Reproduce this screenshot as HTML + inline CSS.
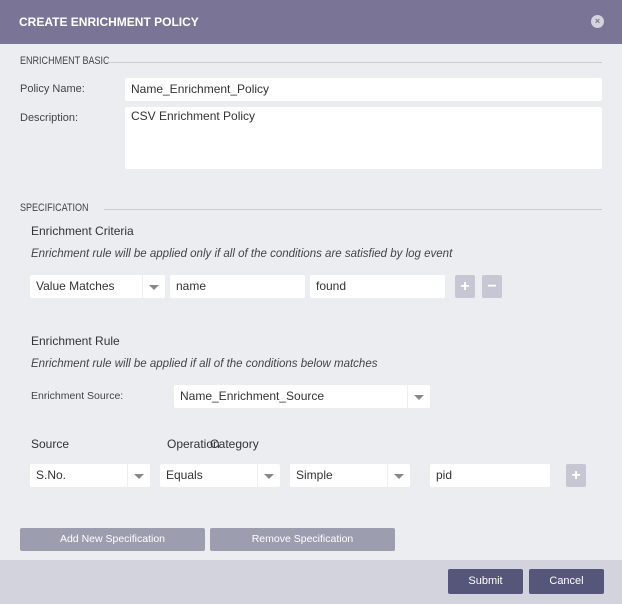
<!DOCTYPE html><html><head><style>
*{box-sizing:border-box;margin:0;padding:0}
body{width:622px;height:604px;background:#ecedf1;font-family:"Liberation Sans",sans-serif;position:relative;overflow:hidden;color:#333}
.a{position:absolute}
.hd{left:0;top:0;width:622px;height:44px;background:#7a7596;color:#fff;font-size:12px;font-weight:bold;line-height:44px;padding-left:19px}
.x{right:18px;top:15px;width:13px;height:13px;border-radius:50%;background:#d4d3de;color:#7a7596;font-size:9px;line-height:13px;text-align:center;font-weight:bold}
.t{font-size:11px;color:#444}
.t2{font-size:12px;color:#333}
.sec{font-size:11px;color:#444;transform:scaleX(.82);transform-origin:0 0;white-space:nowrap}
.ln{height:1px;background:#c9cad3}
.in{background:#fff;border-radius:2px;font-size:12px;color:#333;padding-left:6px;line-height:23px;height:23px}
.sel::after{content:"";position:absolute;right:6px;top:10px;border-left:5px solid transparent;border-right:5px solid transparent;border-top:5px solid #888}
.sel::before{content:"";position:absolute;right:22px;top:0;width:1px;height:23px;background:#eee}
.it{font-size:11.5px;font-style:italic;color:#444}
.pb{background:#c6c7d3;border-radius:2px;width:20px;height:23px;color:#fff;font-weight:bold;font-size:16px;text-align:center;line-height:23px}
.gb{background:#9c9daf;border-radius:2px;color:#fff;font-size:10.5px;text-align:center;line-height:23px;height:23px;width:185px}
.ft{left:0;top:560px;width:622px;height:44px;background:#d2d3dc}
.db{background:#55567a;border-radius:2px;color:#fff;font-size:11px;text-align:center;line-height:25px;height:25px;width:75px}
</style></head><body>
<div class="a hd">CREATE ENRICHMENT POLICY</div>
<div class="a x">×</div>
<div class="a sec" style="left:20px;top:55px">ENRICHMENT BASIC</div>
<div class="a ln" style="left:108px;top:62px;width:494px"></div>
<div class="a t" style="left:20px;top:83px">Policy Name:</div>
<div class="a in" style="left:125px;top:78px;width:477px">Name_Enrichment_Policy</div>
<div class="a t" style="left:20px;top:112px">Description:</div>
<div class="a in" style="left:125px;top:107px;width:477px;height:62px;line-height:16px;padding-top:1px">CSV Enrichment Policy</div>
<div class="a sec" style="left:20px;top:202px">SPECIFICATION</div>
<div class="a ln" style="left:104px;top:209px;width:498px"></div>
<div class="a t2" style="left:31px;top:224px">Enrichment Criteria</div>
<div class="a it" style="left:31px;top:248px">Enrichment rule will be applied only if all of the conditions are satisfied by log event</div>
<div class="a in sel" style="left:30px;top:275px;width:135px">Value Matches</div>
<div class="a in" style="left:170px;top:275px;width:135px">name</div>
<div class="a in" style="left:310px;top:275px;width:135px">found</div>
<div class="a pb" style="left:455px;top:275px">+</div>
<div class="a pb" style="left:482px;top:275px">−</div>
<div class="a t2" style="left:31px;top:334px">Enrichment Rule</div>
<div class="a it" style="left:31px;top:358px">Enrichment rule will be applied if all of the conditions below matches</div>
<div class="a" style="left:31px;top:390px;font-size:10.5px;color:#444">Enrichment Source:</div>
<div class="a in sel" style="left:174px;top:385px;width:256px">Name_Enrichment_Source</div>
<div class="a t2" style="left:31px;top:437px">Source</div>
<div class="a t2" style="left:167px;top:437px">Operation</div>
<div class="a t2" style="left:210px;top:437px">Category</div>
<div class="a in sel" style="left:30px;top:464px;width:120px">S.No.</div>
<div class="a in sel" style="left:160px;top:464px;width:120px">Equals</div>
<div class="a in sel" style="left:290px;top:464px;width:120px">Simple</div>
<div class="a in" style="left:430px;top:464px;width:120px">pid</div>
<div class="a pb" style="left:566px;top:464px">+</div>
<div class="a gb" style="left:20px;top:528px">Add New Specification</div>
<div class="a gb" style="left:210px;top:528px">Remove Specification</div>
<div class="a ft"></div>
<div class="a db" style="left:448px;top:569px">Submit</div>
<div class="a db" style="left:529px;top:569px">Cancel</div>
</body></html>
